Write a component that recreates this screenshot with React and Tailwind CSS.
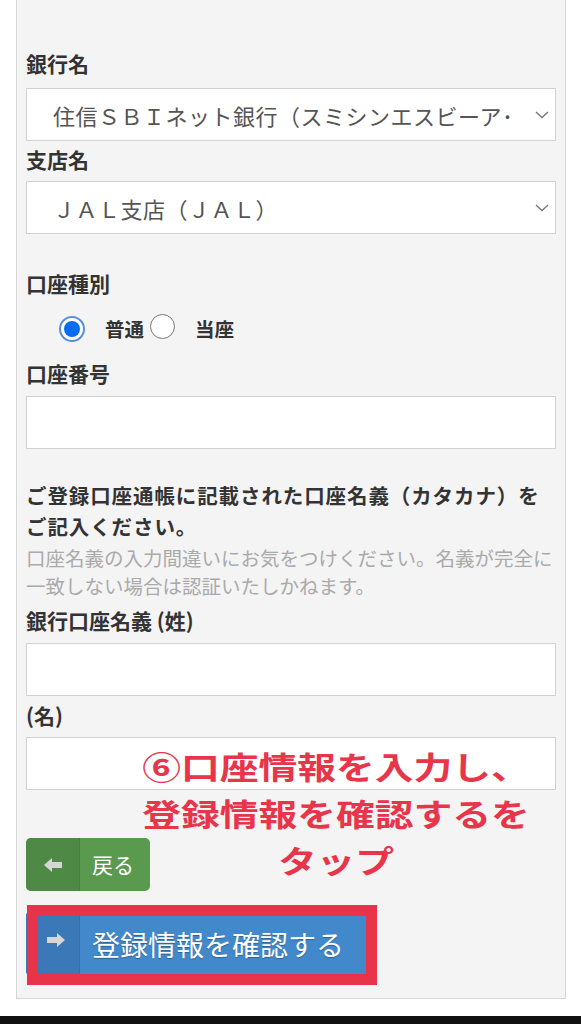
import { useState } from 'react';

const font = { fontFamily: '"Noto Sans CJK JP", "Noto Sans", sans-serif' };

function Chevron() {
  return (
    <svg width="14" height="8" viewBox="0 0 14 8" className="shrink-0">
      <polyline points="1,1 7,6.5 13,1" fill="none" stroke="#777" strokeWidth="1.3" />
    </svg>
  );
}

function FakeSelect({ value }) {
  return (
    <div className="flex items-center h-[53px] bg-white border border-[#d2d2d2] pl-[26px] pr-[6px]">
      <div className="flex-1 whitespace-nowrap text-[22px] tracking-[0.5px] text-[#555] leading-[30px]">
        {value}
      </div>
      <div className="w-[14px] flex justify-center">
        <Chevron />
      </div>
    </div>
  );
}

function Label({ children, className = '' }) {
  return (
    <div className={`text-[21px] font-bold text-[#333] leading-[28px] ${className}`}>{children}</div>
  );
}

function TextInput({ className = '' }) {
  return <div className={`h-[53px] bg-white border border-[#d2d2d2] ${className}`} />;
}

export default function App() {
  const [kind, setKind] = useState('futsu');

  return (
    <div className="min-h-[1024px] bg-white flex flex-col" style={font}>
      <div className="relative ml-[16px] w-[550px] bg-[#f4f4f4] border-x border-b border-[#d6d6d6] px-[9px] pb-[22px]">
        <Label className="pt-[49px]">銀行名</Label>
        <div className="mt-[11px]">
          <FakeSelect value="住信ＳＢＩネット銀行（スミシンエスビーア･" />
        </div>
        <Label className="mt-[4px]">支店名</Label>
        <div className="mt-[8px]">
          <FakeSelect value="ＪＡＬ支店（ＪＡＬ）" />
        </div>

        <Label className="mt-[35px]">口座種別</Label>
        <div className="mt-[16px] h-[32px] flex items-center pl-[33px] text-[19.5px] font-bold text-[#333]">
          <button onClick={() => setKind('futsu')} className="w-[26px] h-[26px] rounded-full border-2 border-[#5a8fd8] bg-white flex items-center justify-center">
            {kind === 'futsu' && <span className="w-[16px] h-[16px] rounded-full bg-[#0a6cf0]" />}
          </button>
          <span className="ml-[20px]">普通</span>
          <button onClick={() => setKind('toza')} className="ml-[6px] -mt-[6px] w-[25px] h-[25px] rounded-full border-[1.5px] border-[#777] bg-white flex items-center justify-center">
            {kind === 'toza' && <span className="w-[15px] h-[15px] rounded-full bg-[#0a6cf0]" />}
          </button>
          <span className="ml-[20px]">当座</span>
        </div>

        <Label className="mt-[14px]">口座番号</Label>
        <TextInput className="mt-[9px]" />

        <div className="mt-[31px] text-[20.5px] tracking-[0.9px] font-bold text-[#333] leading-[31px]">
          ご登録口座通帳に記載された口座名義（カタカナ）を<br />ご記入ください。
        </div>
        <div className="mt-[2px] text-[19.5px] text-[#aaa] leading-[28px]">
          口座名義の入力間違いにお気をつけください。名義が完全に一致しない場合は認証いたしかねます。
        </div>

        <Label className="mt-[6px]">銀行口座名義 (姓)</Label>
        <TextInput className="mt-[9px]" />
        <Label className="mt-[5px]">(名)</Label>
        <TextInput className="mt-[8px]" />

        <div className="mt-[48px] flex">
          <button className="flex h-[53px] rounded-[5px] overflow-hidden bg-[#5a9a4f] text-white">
            <span className="w-[54px] h-full flex items-center justify-center bg-[#4e8a45] border-r border-[#467e3d]">
              <svg width="18" height="14" viewBox="0 0 18 14">
                <polygon points="0,7 8,0 8,4 18,4 18,10 8,10 8,14" fill="#d6d6d6" />
              </svg>
            </span>
            <span className="pl-[12px] pr-[16px] flex items-center text-[21px]">戻る</span>
          </button>
        </div>

        <div className="relative mt-[20px] flex">
          <button className="flex h-[65px] w-[344px] rounded-[5px] overflow-hidden bg-[#4289cc] text-white">
            <span className="w-[54px] h-full flex items-center justify-center bg-[#3a78b8] border-r border-[#356ea8]">
              <svg width="18" height="14" viewBox="0 0 18 14" className="ml-[6px] -mt-[8px]">
                <polygon points="18,7 10,0 10,4 0,4 0,10 10,10 10,14" fill="#d6d6d6" />
              </svg>
            </span>
            <span className="pl-[12px] flex items-center text-[28px] [text-shadow:0_1px_1px_rgba(0,0,0,0.3)]">登録情報を確認する</span>
          </button>
          <div className="absolute left-[1px] top-[-6px] w-[350px] h-[80px] border-[11px] border-[#e8334a] pointer-events-none" />
        </div>

        <div className="absolute left-[159px] top-[742px] w-[320px] scale-x-125 text-center text-[31px] font-bold leading-[47px] text-[#e8354a] pointer-events-none">
          ⑥口座情報を入力し、<br />登録情報を確認するを<br />タップ
        </div>
      </div>
      <div className="h-[17px]" />
      <div className="flex-1 bg-[#111]" />
    </div>
  );
}
